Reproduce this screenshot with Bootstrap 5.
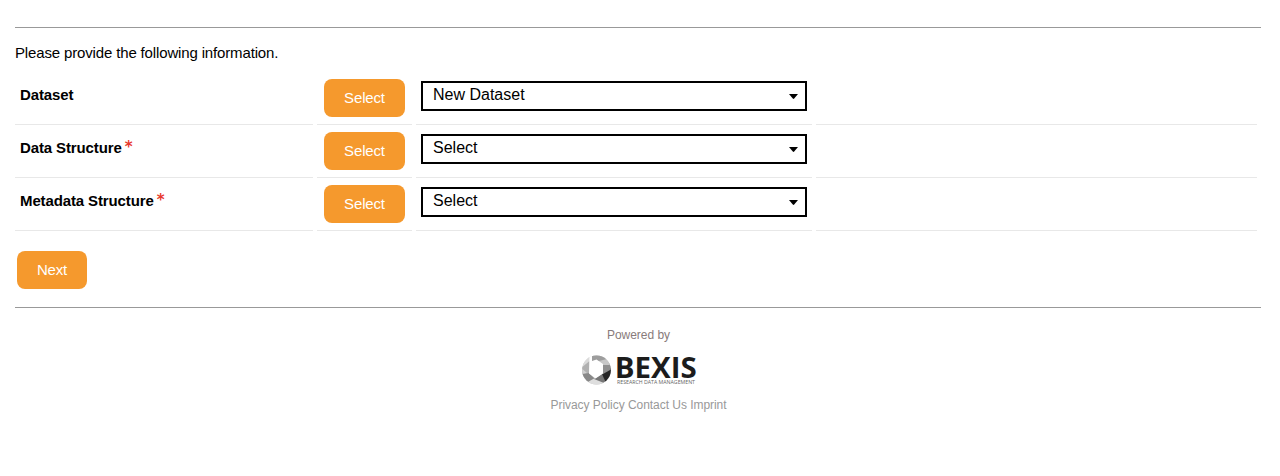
<!DOCTYPE html>
<html lang="en">
<head>
<meta charset="utf-8">
<meta name="viewport" content="width=device-width, initial-scale=1">
<title>Create Dataset</title>
<link rel="stylesheet" href="https://cdn.jsdelivr.net/npm/bootstrap@5.3.0/dist/css/bootstrap.min.css">
<style>
body{font-family:"Liberation Sans",Arial,sans-serif;font-size:15px;line-height:20px;color:#000;background:#fff}
.page{padding:27px 19px 0 15px}
.rule{height:1px;background:#999}
.intro{padding-top:15px;height:48px;letter-spacing:-.148px}
.form-grid{display:grid;grid-template-columns:298px 95px 396px 441px;column-gap:4px;row-gap:4px}
.cell{height:49px;border-bottom:1px solid #e8e8e8}
.label-cell{padding:9px 0 0 5px;font-weight:700;letter-spacing:-.12px}
.label-cell sup{color:#e8392e;font-family:"DejaVu Sans",sans-serif;font-size:15px;top:-1px;margin-left:-1px;line-height:0}
.action-cell{padding:3px 0 0 7px}
.picker-cell{padding:5px 0 0 5px}
.btn.btn-bexis{--bs-btn-color:#fff;--bs-btn-bg:#f5992d;--bs-btn-hover-bg:#e88b20;--bs-btn-hover-color:#fff;--bs-btn-border-width:0;--bs-btn-border-radius:8px;--bs-btn-padding-x:0;--bs-btn-padding-y:0;--bs-btn-font-size:15px;width:81px;height:38px;line-height:38px;letter-spacing:-.15px}
.btn.btn-next{width:70px}
.picker{width:386px;height:30px;border:2px solid #000;padding:0 7px 0 10px;font-size:16px;line-height:24px}
.picker svg{margin-top:11px}
.foot{font-size:12px;line-height:16px;color:#999;padding-left:1px;letter-spacing:-.04px}
</style>
</head>
<body>
<main class="page">
  <div class="rule"></div>
  <div class="intro">Please provide the following information.</div>
  <div class="form-grid">
    <div class="cell label-cell">Dataset</div>
    <div class="cell action-cell"><button class="btn btn-bexis">Select</button></div>
    <div class="cell picker-cell"><div class="picker d-flex justify-content-between"><span>New Dataset</span><svg width="9" height="5" viewBox="0 0 9 5"><path d="M0 0h9L5.2 4.6q-.7.7-1.4 0z"/></svg></div></div>
    <div class="cell"></div>
    <div class="cell label-cell">Data Structure <sup>*</sup></div>
    <div class="cell action-cell"><button class="btn btn-bexis">Select</button></div>
    <div class="cell picker-cell"><div class="picker d-flex justify-content-between"><span>Select</span><svg width="9" height="5" viewBox="0 0 9 5"><path d="M0 0h9L5.2 4.6q-.7.7-1.4 0z"/></svg></div></div>
    <div class="cell"></div>
    <div class="cell label-cell">Metadata Structure <sup>*</sup></div>
    <div class="cell action-cell"><button class="btn btn-bexis">Select</button></div>
    <div class="cell picker-cell"><div class="picker d-flex justify-content-between"><span>Select</span><svg width="9" height="5" viewBox="0 0 9 5"><path d="M0 0h9L5.2 4.6q-.7.7-1.4 0z"/></svg></div></div>
    <div class="cell"></div>
  </div>
  <div style="padding:20px 0 18px 2px" class="d-flex"><button class="btn btn-bexis btn-next">Next</button></div>
  <div class="rule"></div>
  <footer class="foot d-flex flex-column align-items-center">
    <div style="margin-top:19px;color:#887b7b">Powered by</div>
    <svg class="overflow-visible" width="116" height="30" viewBox="0 0 116 30" style="margin-top:12px" role="img" aria-label="BEXIS">
      <defs><clipPath id="disc"><circle cx="15.500" cy="15" r="14.400"/></clipPath></defs>
      <g clip-path="url(#disc)">
        <path fill="#c4c4c4" d="M0 0h30v30H0z"/>
        <path fill="#dadada" d="M0 0h9v7L0 15z"/>
        <path fill="#b0b0b0" d="M0 13l8.500-7v12L0 20z"/>
        <path fill="#d0d0d0" d="M0 13l6 5-6 3z"/>
        <path fill="#888" d="M0 19l8-1 6 6-9 5z"/>
        <path fill="#dedede" d="M5 28l9-5 10 5v2H5z"/>
        <path fill="#777" d="M13 24l8-5 5 8-3 1z"/>
        <path fill="#252525" d="M21 19l9-6v11l-5 4z"/>
        <path fill="#909090" d="M22 10l9-2v6l-9 5z"/>
        <path fill="#c8c8c8" d="M18 5l8-3 4 8h-8z"/>
        <path fill="#9d9d9d" d="M11 0h11l4 4-8 2-7 1z"/>
      </g>
      <path fill="#fff" d="M8.500 1.500l2.500-.5v5L15.500 4.500 22 9v9.500L14.500 23.500 8 18.500z"/>
      <g letter-spacing="0">
        <text x="33.800" y="22.500" fill="#1c1c1c" font-family="Open Sans,sans-serif" font-weight="700" font-size="28" textLength="82" lengthAdjust="spacingAndGlyphs">BEXIS</text>
        <text x="36" y="28.700" fill="#666" font-family="Open Sans,sans-serif" font-size="5" textLength="78" lengthAdjust="spacingAndGlyphs">RESEARCH DATA MANAGEMENT</text>
      </g>
    </svg>
    <div style="margin-top:12px">Privacy Policy Contact Us Imprint</div>
  </footer>
</main>
<script src="https://cdn.jsdelivr.net/npm/bootstrap@5.3.0/dist/js/bootstrap.bundle.min.js"></script>
</body>
</html>
